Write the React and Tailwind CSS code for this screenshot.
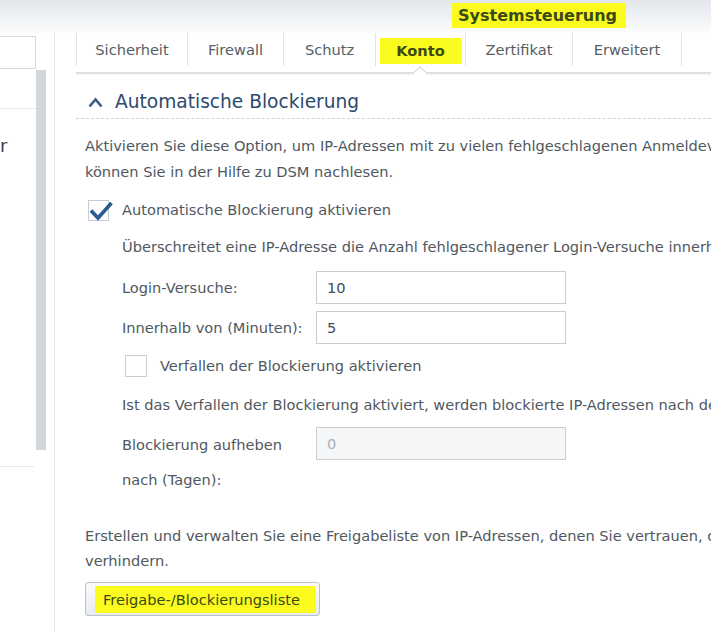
import React from "react";

const font = { fontFamily: '"DejaVu Sans", Verdana, sans-serif' };

const Tab = ({ label, w, first, active }) => (
  <div
    className={`h-[33px] flex items-center justify-center border-r border-[#e1e4e7] ${first ? "border-l" : ""} ${w}`}
  >
    {active ? (
      <span className="inline-block bg-[#fbfb1f] w-[82px] h-[26px] leading-[26px] text-center font-bold text-[#3b4a12] mt-[3px]">
        {label}
      </span>
    ) : (
      <span className="text-[#555d65]">{label}</span>
    )}
  </div>
);

const Field = ({ value, disabled }) => (
  <div
    className={`w-[250px] h-[33px] shrink-0 border border-[#c9ced4] pl-[10px] flex items-center ${
      disabled ? "bg-[#f4f6f8] text-[#aab1b8]" : "bg-white text-[#454c53]"
    }`}
  >
    {value}
  </div>
);

const App = () => {
  return (
    <div className="w-[711px] h-[632px] overflow-hidden bg-white text-[14.6px] text-[#50585f]" style={font}>
      {/* window title */}
      <div className="h-[33px] bg-linear-to-b from-[#e3e7ec] to-[#fbfcfd] pl-[452px] pt-[3px]">
        <span className="inline-block bg-[#fbfb1f] w-[174px] h-[25px] leading-[25px] pl-[6px] text-[16px] font-bold text-[#3b4a12]">
          Systemsteuerung
        </span>
      </div>

      <div className="flex h-[599px]">
        {/* left list (cut off) */}
        <div className="w-[55px] shrink-0 border-r border-[#e2e5e8] flex flex-col">
          <div className="mt-[3px] w-[36px] h-[33px] border-y border-r border-[#d7dadd]" />
          <div className="flex">
            <div className="w-[36px]">
              <div className="mt-[39px] border-t border-[#e6e8ea]" />
              <div className="mt-[26px] text-[18px] leading-[22px] text-[#3a3f44]">r</div>
              <div className="mt-[309px] w-[34px] border-t border-[#e6e8ea]" />
            </div>
            <div className="mt-[1px] w-[10px] h-[380px] bg-[#d4d7da]" />
          </div>
        </div>

        {/* main pane */}
        <div className="flex-1 min-w-0 pl-[21px] overflow-hidden">
          <div className="relative h-[41px] border-b-2 border-[#dcdfe3] flex shadow-[0_1px_2px_rgba(0,0,0,0.05)]">
            <Tab label="Sicherheit" w="w-[112px]" first />
            <Tab label="Firewall" w="w-[96px]" />
            <Tab label="Schutz" w="w-[92px]" />
            <Tab label="Konto" w="w-[90px]" active />
            <Tab label="Zertifikat" w="w-[107px]" />
            <Tab label="Erweitert" w="w-[109px]" />
            <div className="absolute left-[339px] top-[35px] w-[10px] h-[10px] rotate-45 bg-white border-l border-t border-[#d3d7db]" />
          </div>

          {/* section header */}
          <div className="h-[45px] border-b border-dashed border-[#cdd2d7] pt-[16px] pl-[12px] flex items-start">
            <svg width="15" height="11" viewBox="0 0 15 11" className="mt-[7px]">
              <polyline points="1.5,9.5 7.5,2.5 13.5,9.5" fill="none" stroke="#3d5d83" strokeWidth="2.6" />
            </svg>
            <span className="ml-[12px] text-[18.6px] leading-[24px] text-[#2c4a6e]">Automatische Blockierung</span>
          </div>

          <div className="pl-[9px]">
            <p className="mt-[14px] leading-[26px] whitespace-nowrap">
              Aktivieren Sie diese Option, um IP-Adressen mit zu vielen fehlgeschlagenen Anmeldeversuchen
              <br />
              können Sie in der Hilfe zu DSM nachlesen.
            </p>

            <div className="mt-[14px] h-[22px] flex items-center">
              <div className="relative ml-[3px] w-[21px] h-[21px] border border-[#c5ccd3] bg-white">
                <svg width="28" height="26" viewBox="0 0 28 26" className="absolute left-[0px] top-[-4px]">
                  <polyline points="2,13.5 9,21 22.5,6" fill="none" stroke="#2d5a92" strokeWidth="3.6" />
                </svg>
              </div>
              <span className="ml-[13px]">Automatische Blockierung aktivieren</span>
            </div>

            <div className="pl-[37px]">
              <div className="mt-[13px] h-[26px] leading-[26px] whitespace-nowrap">
                Überschreitet eine IP-Adresse die Anzahl fehlgeschlagener Login-Versuche innerhalb
              </div>

              <div className="mt-[11px] flex items-center">
                <div className="w-[194px] shrink-0">Login-Versuche:</div>
                <Field value="10" />
              </div>
              <div className="mt-[7px] flex items-center">
                <div className="w-[194px] shrink-0">Innerhalb von (Minuten):</div>
                <Field value="5" />
              </div>

              <div className="mt-[11px] h-[22px] flex items-center">
                <div className="ml-[3px] w-[22px] h-[22px] border border-[#c8cfd6] bg-white" />
                <span className="ml-[13px]">Verfallen der Blockierung aktivieren</span>
              </div>

              <div className="mt-[15px] h-[26px] leading-[26px] whitespace-nowrap">
                Ist das Verfallen der Blockierung aktiviert, werden blockierte IP-Adressen nach der
              </div>

              <div className="mt-[9px] flex items-start">
                <div className="w-[194px] shrink-0 leading-[35px]">
                  Blockierung aufheben
                  <br />
                  nach (Tagen):
                </div>
                <Field value="0" disabled />
              </div>
            </div>

            <p className="mt-[26px] leading-[25px] whitespace-nowrap">
              Erstellen und verwalten Sie eine Freigabeliste von IP-Adressen, denen Sie vertrauen, oder
              <br />
              verhindern.
            </p>

            <button className="mt-[9px] w-[235px] h-[34px] border border-[#b9c1c9] rounded-[3px] bg-linear-to-b from-[#f9fafc] to-[#e7ebef] flex items-center pl-[9px]">
              <span className="inline-block bg-[#fbfb1f] w-[221px] h-[27px] leading-[27px] pl-[8px] text-left text-[#3b4a12] rounded-[2px]">
                Freigabe-/Blockierungsliste
              </span>
            </button>
          </div>
        </div>
      </div>
    </div>
  );
};

export default App;
